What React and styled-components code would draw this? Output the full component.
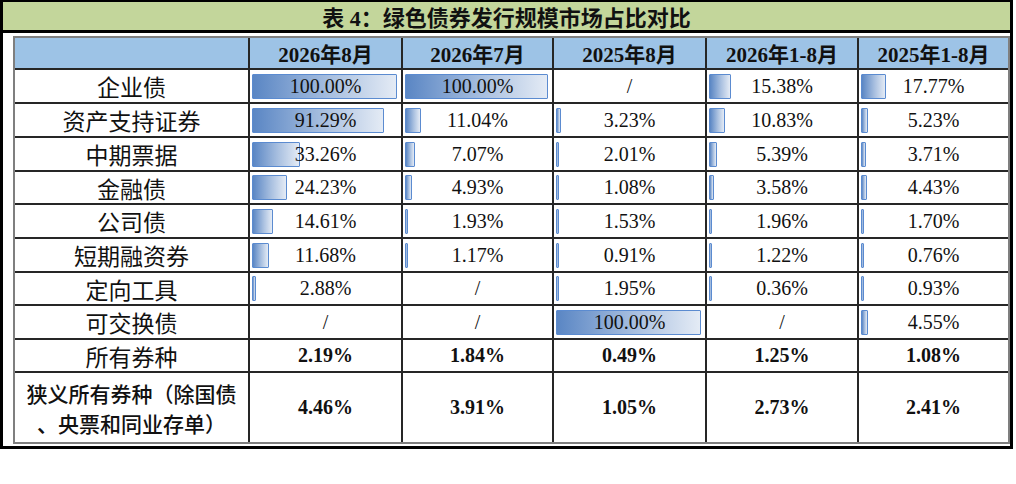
import React from 'react';
import styled, { createGlobalStyle } from 'styled-components';

const Global = createGlobalStyle`
  html, body { margin: 0; padding: 0; background: #ffffff; }
  body { font-family: "Liberation Serif", "Noto Sans CJK SC", serif; color: #111; }
`;

const Frame = styled.div`
  width: 1013px;
  box-sizing: border-box;
  border: 3px solid #000;
  border-top-width: 2px;
  padding-bottom: 2px;
  background: #fff;
`;

const TitleBar = styled.div`
  height: 28px;
  background: #c3d69b;
  border-bottom: 3px solid #000;
  display: flex;
  align-items: center;
  justify-content: center;
  font-family: "Liberation Serif", "Noto Sans CJK SC", serif;
  font-weight: 700;
  font-size: 22px;
`;

const Table = styled.div`
  margin: 3px 0 0 10px;
  display: grid;
  grid-template-columns: 233px 151px 149px 151px 150px 149px;
  grid-template-rows: 30px 32px 32px 32px 31px 32px 32px 31px 32px 31px 69px;
  gap: 2px;
  background: #262626;
  border: 2px solid #7f7f7f;
`;

const HeadCell = styled.div`
  background: #9dc3e6;
  display: flex;
  align-items: center;
  justify-content: center;
  font-family: "Liberation Serif", "Noto Sans CJK SC", serif;
  font-weight: 700;
  font-size: 21px;
  white-space: nowrap;
`;

const LabelCell = styled.div`
  background: #fff;
  display: flex;
  align-items: center;
  justify-content: center;
  text-align: center;
  font-family: "Noto Sans CJK SC", sans-serif;
  font-weight: ${(p) => p.$weight || 400};
  font-size: ${(p) => p.$size || 23}px;
  line-height: 30px;
  white-space: nowrap;
`;

const ValueCell = styled.div`
  background: #fff;
  display: grid;
  grid-template-areas: 'stack';
  align-items: center;
`;

const Bar = styled.div`
  grid-area: stack;
  justify-self: start;
  align-self: center;
  margin-left: 2px;
  height: 25px;
  min-width: 3px;
  box-sizing: border-box;
  border: 1.5px solid #5b8bd0;
  border-radius: 1px;
  background: linear-gradient(to right, #5a86c4 0%, #a9c0e0 55%, #e4ebf5 100%);
`;

const Value = styled.div`
  grid-area: stack;
  justify-self: center;
  align-self: center;
  font-family: "Liberation Serif", serif;
  font-size: 20px;
  font-weight: ${(p) => (p.$bold ? 700 : 400)};
  position: relative;
`;

const columns = ['2026年8月', '2026年7月', '2025年8月', '2026年1-8月', '2025年1-8月'];

const rows = [
  ['企业债', ['100.00%', '100.00%', '/', '15.38%', '17.77%']],
  ['资产支持证券', ['91.29%', '11.04%', '3.23%', '10.83%', '5.23%']],
  ['中期票据', ['33.26%', '7.07%', '2.01%', '5.39%', '3.71%']],
  ['金融债', ['24.23%', '4.93%', '1.08%', '3.58%', '4.43%']],
  ['公司债', ['14.61%', '1.93%', '1.53%', '1.96%', '1.70%']],
  ['短期融资券', ['11.68%', '1.17%', '0.91%', '1.22%', '0.76%']],
  ['定向工具', ['2.88%', '/', '1.95%', '0.36%', '0.93%']],
  ['可交换债', ['/', '/', '100.00%', '/', '4.55%']],
];

const totalAll = ['2.19%', '1.84%', '0.49%', '1.25%', '1.08%'];
const totalNarrow = ['4.46%', '3.91%', '1.05%', '2.73%', '2.41%'];

function DataCell({ value }) {
  const num = parseFloat(value);
  const hasBar = !Number.isNaN(num);
  return (
    <ValueCell>
      {hasBar && <Bar style={{ width: `calc((100% - 6px) * ${num / 100})` }} />}
      <Value>{value}</Value>
    </ValueCell>
  );
}

export default function App() {
  return (
    <>
      <Global />
      <Frame>
        <TitleBar>表 4：绿色债券发行规模市场占比对比</TitleBar>
        <Table>
          <HeadCell />
          {columns.map((c) => (
            <HeadCell key={c}>{c}</HeadCell>
          ))}
          {rows.map(([label, vals]) => (
            <React.Fragment key={label}>
              <LabelCell>{label}</LabelCell>
              {vals.map((v, i) => (
                <DataCell key={i} value={v} />
              ))}
            </React.Fragment>
          ))}
          <LabelCell>所有券种</LabelCell>
          {totalAll.map((v, i) => (
            <ValueCell key={i}>
              <Value $bold>{v}</Value>
            </ValueCell>
          ))}
          <LabelCell $weight={500} $size={21}>
            狭义所有券种（除国债
            <br />
            、央票和同业存单）
          </LabelCell>
          {totalNarrow.map((v, i) => (
            <ValueCell key={i}>
              <Value $bold>{v}</Value>
            </ValueCell>
          ))}
        </Table>
      </Frame>
    </>
  );
}
